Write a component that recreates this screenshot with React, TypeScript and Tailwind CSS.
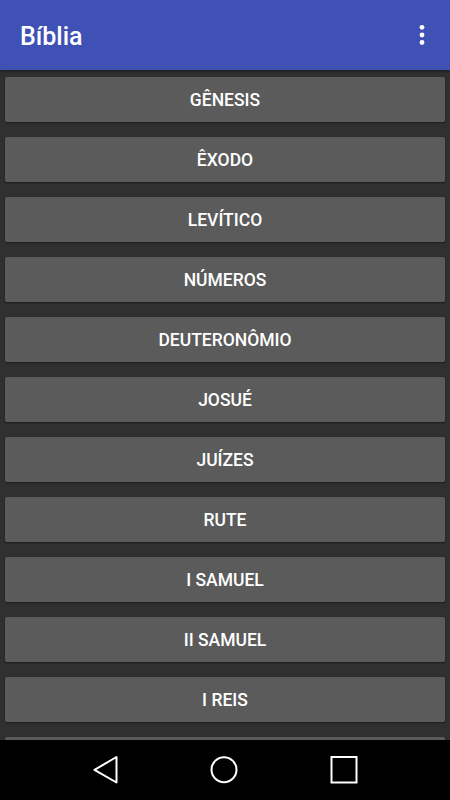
const books = [
  'GÊNESIS',
  'ÊXODO',
  'LEVÍTICO',
  'NÚMEROS',
  'DEUTERONÔMIO',
  'JOSUÉ',
  'JUÍZES',
  'RUTE',
  'I SAMUEL',
  'II SAMUEL',
  'I REIS',
  'II REIS',
]

export default function App() {
  return (
    <div className="flex h-[800px] w-[450px] flex-col overflow-hidden bg-[#303030] font-['Roboto',sans-serif]">
      {/* App bar */}
      <header className="relative z-10 flex h-[70px] shrink-0 items-center justify-between bg-[#3f51b5] pl-[20px] pr-[25px] shadow-[0_1px_3px_rgba(0,0,0,0.5)]">
        <h1 className="pt-[3px] text-[25px] font-medium leading-none text-white">Bíblia</h1>
        <svg width="6" height="24" viewBox="0 0 6 24" fill="white">
          <circle cx="3" cy="4.3" r="2.4" />
          <circle cx="3" cy="12" r="2.4" />
          <circle cx="3" cy="19.5" r="2.4" />
        </svg>
      </header>

      {/* Book list */}
      <main className="flex flex-1 flex-col gap-[15px] overflow-hidden px-[5px] pt-[7px]">
        {books.map((b) => (
          <button
            key={b}
            type="button"
            className="flex h-[45px] w-full shrink-0 items-center justify-center rounded-[2px] bg-[#5b5b5b] pt-[2px] text-[17.5px] font-medium text-white shadow-[0_1px_2px_rgba(0,0,0,0.45)]"
          >
            {b}
          </button>
        ))}
      </main>

      {/* Navigation bar */}
      <nav className="flex h-[60px] shrink-0 items-center bg-black">
        <svg width="450" height="60" viewBox="0 0 450 60" fill="none" stroke="white" strokeWidth="2">
          <path d="M116.5 17 L116.5 42.5 L94.5 29.8 Z" strokeLinejoin="round" />
          <circle cx="224" cy="29.7" r="12.5" />
          <rect x="331.5" y="17" width="25" height="25.5" />
        </svg>
      </nav>
    </div>
  )
}
